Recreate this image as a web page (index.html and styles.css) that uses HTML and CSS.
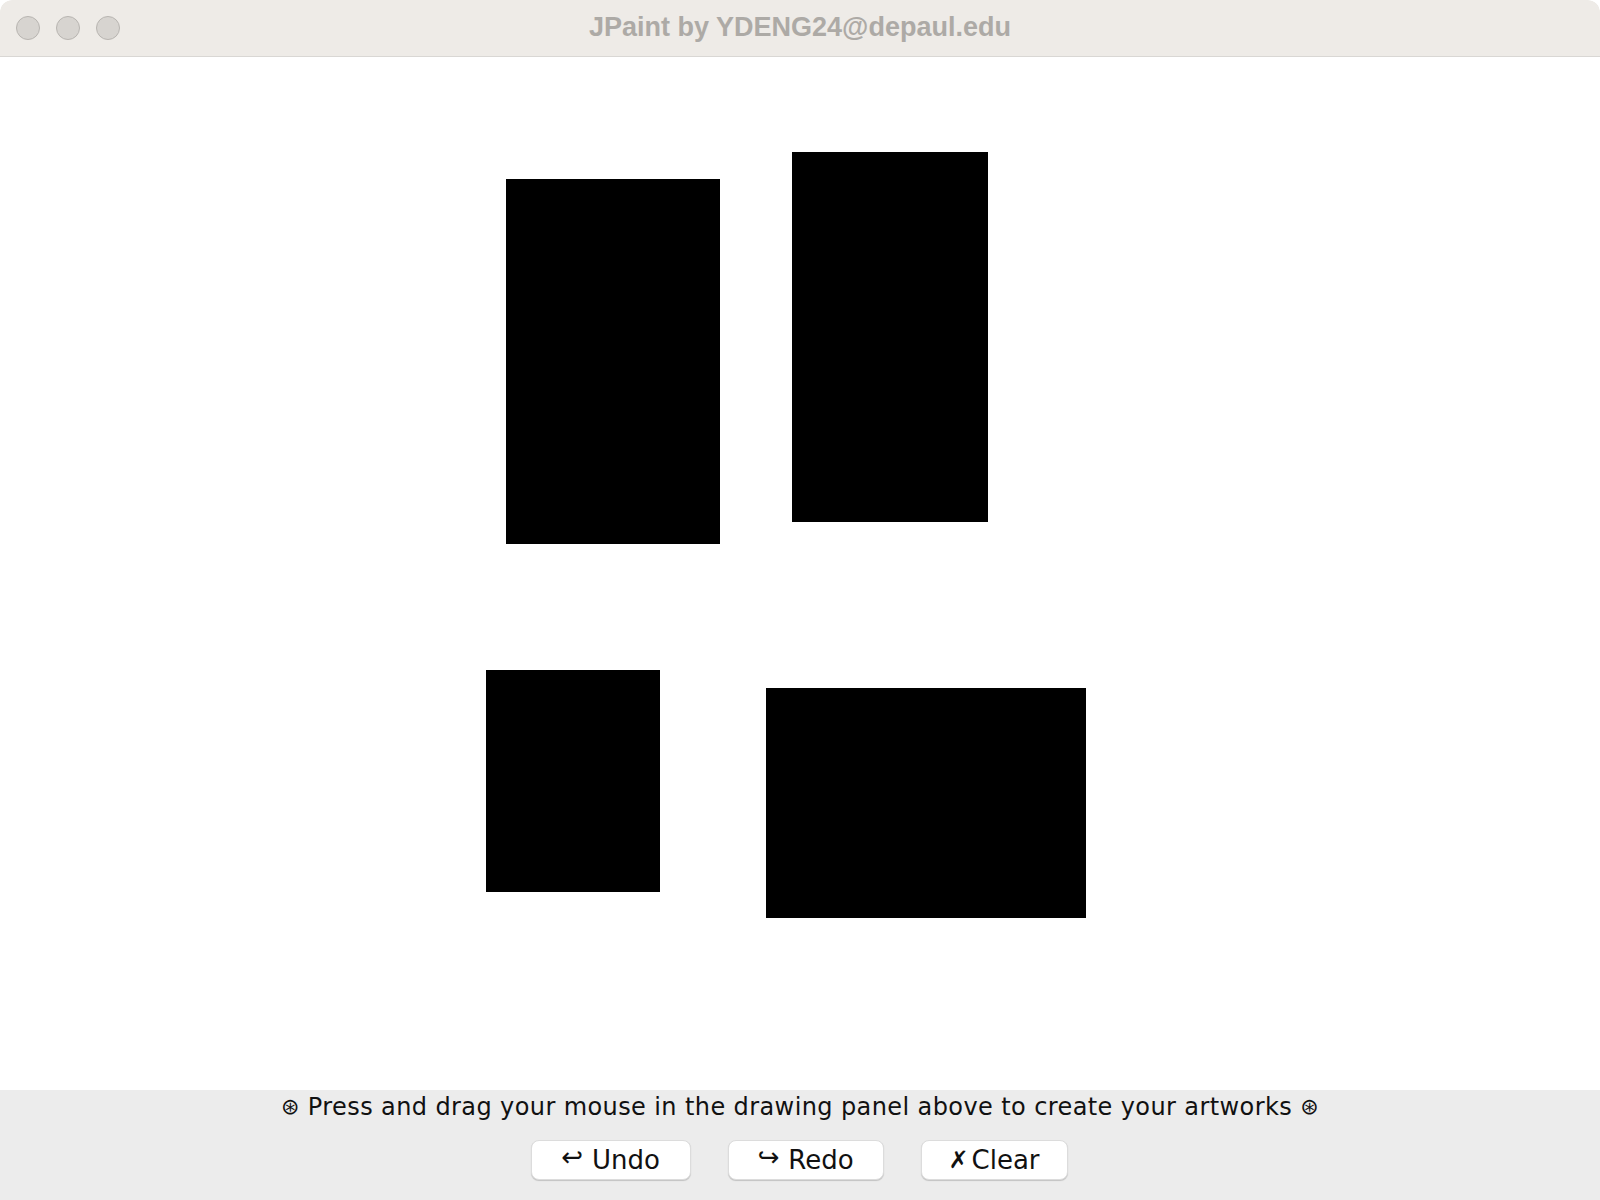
FILE: index.html
```html
<!DOCTYPE html>
<html>
<head>
<meta charset="utf-8">
<title>JPaint</title>
<link rel="stylesheet" href="styles.css">
</head>
<body>
<div class="window">
  <div class="titlebar">
    <div class="lights">
      <span class="light"></span>
      <span class="light"></span>
      <span class="light"></span>
    </div>
    <div class="title">JPaint by YDENG24@depaul.edu</div>
  </div>
  <div class="canvas">
    <div class="shape" style="left:506px;top:122px;width:214px;height:365px"></div>
    <div class="shape" style="left:792px;top:95px;width:196px;height:370px"></div>
    <div class="shape" style="left:486px;top:613px;width:174px;height:222px"></div>
    <div class="shape" style="left:766px;top:631px;width:320px;height:230px"></div>
  </div>
  <div class="panel">
    <div class="hint"><span class="star">⊛</span> Press and drag your mouse in the drawing panel above to create your artworks <span class="star">⊛</span></div>
    <div class="buttons">
      <button class="btn btn-undo"><span class="ico">↩</span>Undo</button>
      <button class="btn btn-redo"><span class="ico">↪</span>Redo</button>
      <button class="btn btn-clear"><span class="ico ico-x">✗</span>Clear</button>
    </div>
  </div>
</div>
</body>
</html>
```
FILE: styles.css
```css
html, body {
  margin: 0;
  padding: 0;
  background: #ffffff;
}
.window {
  width: 1600px;
  height: 1200px;
  display: flex;
  flex-direction: column;
  overflow: hidden;
  border-radius: 12px 12px 0 0;
  background: #ffffff;
}
.titlebar {
  height: 56px;
  flex: 0 0 56px;
  background: #eeebe7;
  border-bottom: 1px solid #d9d7d4;
  position: relative;
  display: flex;
  align-items: center;
  justify-content: center;
  border-radius: 12px 12px 0 0;
}
.lights {
  position: absolute;
  left: 16px;
  top: 16px;
  display: flex;
  gap: 16px;
}
.light {
  width: 22px;
  height: 22px;
  border-radius: 50%;
  background: #d7d4d0;
  border: 1px solid #b8b5b1;
}
.title {
  font-family: "Liberation Sans", Arial, sans-serif;
  font-weight: bold;
  font-size: 27px;
  color: #adaaa6;
  margin-top: -1px;
}
.canvas {
  flex: 1 1 auto;
  position: relative;
  background: #ffffff;
}
.shape {
  position: absolute;
  background: #000000;
}
.panel {
  flex: 0 0 110px;
  height: 110px;
  background: #ececec;
  display: flex;
  flex-direction: column;
  align-items: center;
  font-family: "DejaVu Sans", "Open Sans", sans-serif;
  color: #111111;
}
.hint {
  font-size: 24px;
  margin-top: 3px;
  line-height: 28px;
  letter-spacing: 0.4px;
}
.star {
  font-size: 22px;
  vertical-align: 1px;
}
.buttons {
  display: flex;
  gap: 37px;
  margin-top: 19px;
  margin-left: -2px;
}
.btn {
  font-family: "DejaVu Sans", "Open Sans", sans-serif;
  font-size: 26px;
  color: #111111;
  background: #ffffff;
  border: 1px solid #dcdcdc;
  border-radius: 8px;
  height: 40px;
  padding: 0;
  display: flex;
  align-items: center;
  justify-content: center;
  box-shadow: 0 1px 1px rgba(0,0,0,0.18);
}
.ico {
  font-size: 26px;
  margin-right: 9px;
  position: relative;
  top: -3px;
}
.ico-x {
  font-size: 24px;
  font-weight: bold;
  margin-right: 3px;
  top: 0;
}
.btn-undo { width: 160px; }
.btn-redo { width: 156px; }
.btn-clear { width: 147px; }
```
